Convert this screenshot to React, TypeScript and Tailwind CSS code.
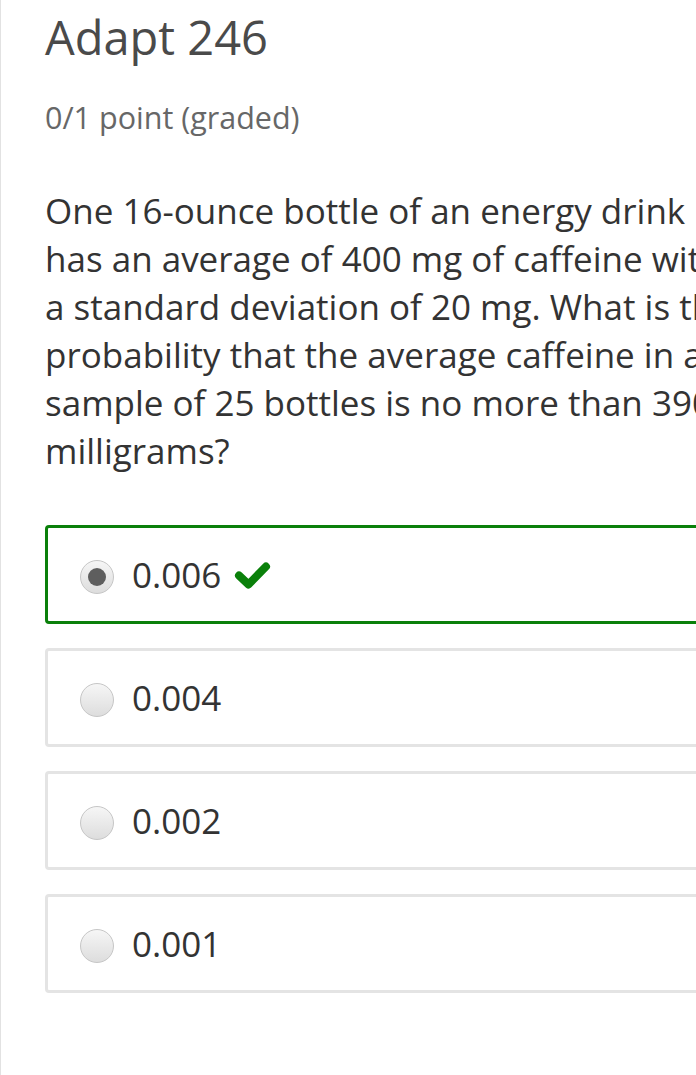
const options = [
  { value: "0.006", selected: true },
  { value: "0.004", selected: false },
  { value: "0.002", selected: false },
  { value: "0.001", selected: false },
];

function CheckIcon() {
  return (
    <svg viewBox="0 0 37 28" className="w-[37px] h-[28px] ml-[13px]" fill="none">
      <path
        d="M5 14.5 L14.5 23.5 L32 5.5"
        stroke="#0a800a"
        strokeWidth="8"
        strokeLinecap="round"
        strokeLinejoin="round"
      />
    </svg>
  );
}

function Radio({ checked }: { checked: boolean }) {
  return (
    <span className="mt-[5px] w-[34px] h-[34px] rounded-full border border-[#c6c6c6] bg-gradient-to-b from-[#f6f6f6] to-[#dddddd] flex items-center justify-center shrink-0">
      {checked && <span className="w-[18px] h-[18px] rounded-full bg-[#5e5e5e]" />}
    </span>
  );
}

export default function App() {
  return (
    <div
      className="min-h-[1075px] bg-white border-l border-[#e2e2e2] overflow-hidden"
      style={{ fontFamily: '"Open Sans", "Noto Sans", sans-serif' }}
    >
      <div className="pl-[44px] w-[800px]">
        <h2 className="pt-[5px] text-[47px] leading-[64px] font-normal text-[#4a4a4a]">
          Adapt 246
        </h2>
        <div className="mt-[28px] text-[30.5px] leading-[41px] text-[#676767]">
          0/1 point (graded)
        </div>

        {/* question */}
        <p className="mt-[49px] text-[35px] leading-[48px] text-[#333333] whitespace-nowrap">
          One 16-ounce bottle of an energy drink
          <br />
          has an average of 400 mg of caffeine with
          <br />
          a standard deviation of 20 mg. What is the
          <br />
          probability that the average caffeine in a
          <br />
          sample of 25 bottles is no more than 390
          <br />
          milligrams?
        </p>

        {/* answers */}
        <div className="mt-[50px] w-[720px] flex flex-col gap-[24px]">
          {options.map((opt) => (
            <label
              key={opt.value}
              className={`h-[99px] rounded-[4px] border-[3px] flex items-center pl-[32px] ${
                opt.selected ? "border-[#0a800a]" : "border-[#e4e4e4]"
              }`}
            >
              <Radio checked={opt.selected} />
              <span className="ml-[18px] text-[35px] leading-[48px] text-[#333333]">
                {opt.value}
              </span>
              {opt.selected && <CheckIcon />}
            </label>
          ))}
        </div>
      </div>
    </div>
  );
}
